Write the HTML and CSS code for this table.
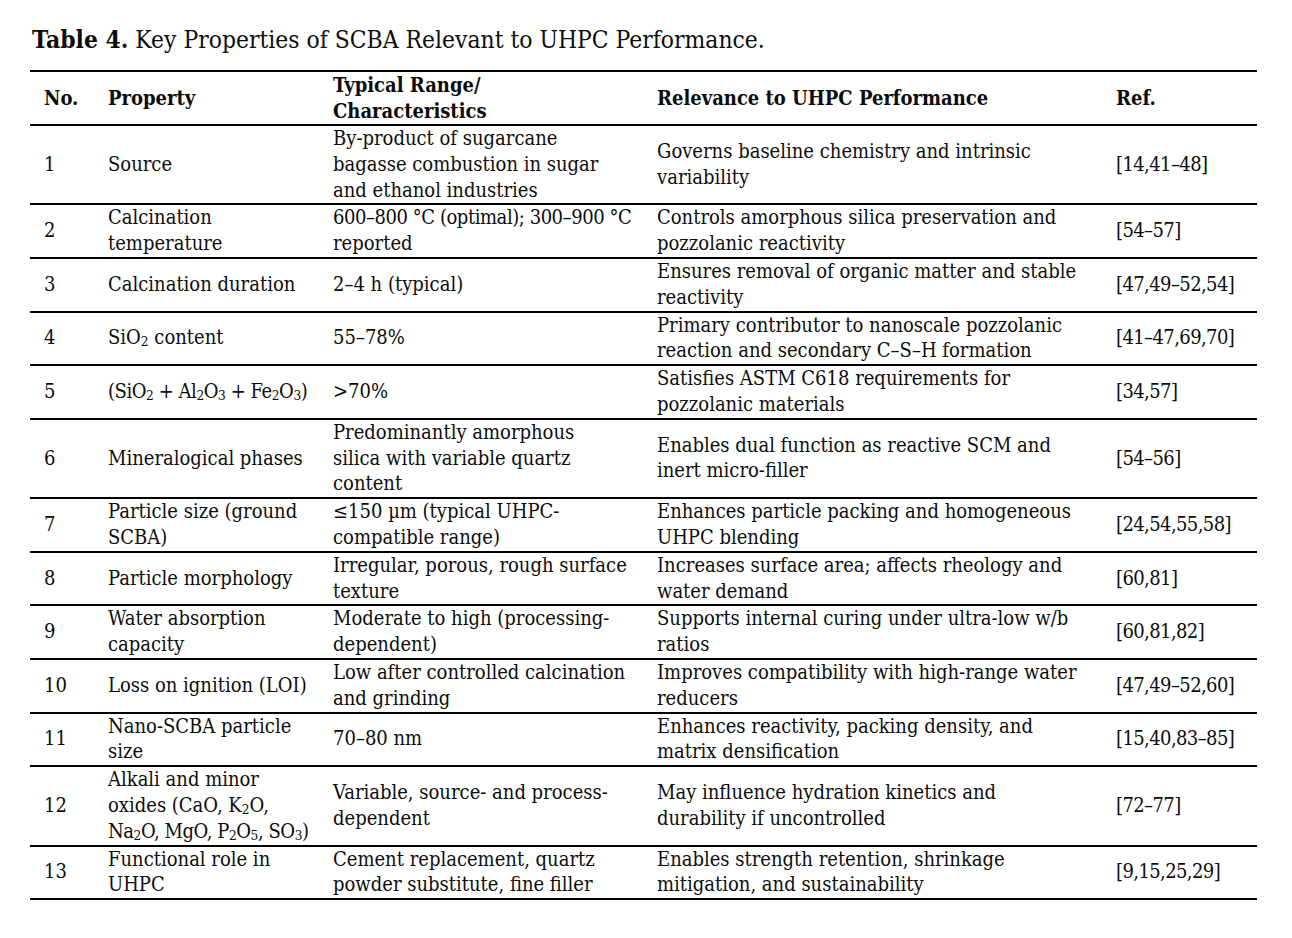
FILE: index.html
```html
<!DOCTYPE html>
<html lang="en">
<head>
<meta charset="utf-8">
<title>Table 4</title>
<link rel="stylesheet" href="styles.css">
</head>
<body>
<div class="page">
  <h1 class="caption"><b>Table 4.</b> Key Properties of SCBA Relevant to UHPC Performance.</h1>
  <table class="props">
    <colgroup>
      <col class="c-no"><col class="c-prop"><col class="c-range"><col class="c-rel"><col class="c-ref">
    </colgroup>
    <thead>
      <tr>
        <th class="first">No.</th>
        <th>Property</th>
        <th>Typical Range/<br>Characteristics</th>
        <th>Relevance to UHPC Performance</th>
        <th>Ref.</th>
      </tr>
    </thead>
    <tbody>
      <tr>
        <td class="first">1</td>
        <td>Source</td>
        <td>By-product of sugarcane<br>bagasse combustion in sugar<br>and ethanol industries</td>
        <td>Governs baseline chemistry and intrinsic<br>variability</td>
        <td class="ref">[14,41–48]</td>
      </tr>
      <tr>
        <td class="first">2</td>
        <td>Calcination<br>temperature</td>
        <td><span class="tight">600–800 °C (optimal); 300–900 °C</span><br>reported</td>
        <td>Controls amorphous silica preservation and<br>pozzolanic reactivity</td>
        <td class="ref">[54–57]</td>
      </tr>
      <tr>
        <td class="first">3</td>
        <td>Calcination duration</td>
        <td>2–4 h (typical)</td>
        <td>Ensures removal of organic matter and stable<br>reactivity</td>
        <td class="ref">[47,49–52,54]</td>
      </tr>
      <tr>
        <td class="first">4</td>
        <td>SiO<sub>2</sub> content</td>
        <td>55–78%</td>
        <td>Primary contributor to nanoscale pozzolanic<br>reaction and secondary C–S–H formation</td>
        <td class="ref">[41–47,69,70]</td>
      </tr>
      <tr>
        <td class="first">5</td>
        <td><span class="tight">(SiO<sub>2</sub> + Al<sub>2</sub>O<sub>3</sub> + Fe<sub>2</sub>O<sub>3</sub>)</span></td>
        <td>&gt;70%</td>
        <td>Satisfies ASTM C618 requirements for<br>pozzolanic materials</td>
        <td class="ref">[34,57]</td>
      </tr>
      <tr>
        <td class="first">6</td>
        <td>Mineralogical phases</td>
        <td>Predominantly amorphous<br>silica with variable quartz<br>content</td>
        <td>Enables dual function as reactive SCM and<br>inert micro-filler</td>
        <td class="ref">[54–56]</td>
      </tr>
      <tr>
        <td class="first">7</td>
        <td>Particle size (ground<br>SCBA)</td>
        <td>≤150 µm (typical UHPC-<br>compatible range)</td>
        <td>Enhances particle packing and homogeneous<br>UHPC blending</td>
        <td class="ref">[24,54,55,58]</td>
      </tr>
      <tr>
        <td class="first">8</td>
        <td>Particle morphology</td>
        <td>Irregular, porous, rough surface<br>texture</td>
        <td>Increases surface area; affects rheology and<br>water demand</td>
        <td class="ref">[60,81]</td>
      </tr>
      <tr>
        <td class="first">9</td>
        <td>Water absorption<br>capacity</td>
        <td>Moderate to high (processing-<br>dependent)</td>
        <td>Supports internal curing under ultra-low w/b<br>ratios</td>
        <td class="ref">[60,81,82]</td>
      </tr>
      <tr>
        <td class="first">10</td>
        <td>Loss on ignition (LOI)</td>
        <td>Low after controlled calcination<br>and grinding</td>
        <td>Improves compatibility with high-range water<br>reducers</td>
        <td class="ref">[47,49–52,60]</td>
      </tr>
      <tr>
        <td class="first">11</td>
        <td>Nano-SCBA particle<br>size</td>
        <td>70–80 nm</td>
        <td>Enhances reactivity, packing density, and<br>matrix densification</td>
        <td class="ref">[15,40,83–85]</td>
      </tr>
      <tr>
        <td class="first">12</td>
        <td>Alkali and minor<br>oxides (CaO, K<sub>2</sub>O,<br><span class="tight">Na<sub>2</sub>O, MgO, P<sub>2</sub>O<sub>5</sub>, SO<sub>3</sub>)</span></td>
        <td>Variable, source- and process-<br>dependent</td>
        <td>May influence hydration kinetics and<br>durability if uncontrolled</td>
        <td class="ref">[72–77]</td>
      </tr>
      <tr>
        <td class="first">13</td>
        <td>Functional role in<br>UHPC</td>
        <td>Cement replacement, quartz<br>powder substitute, fine filler</td>
        <td>Enables strength retention, shrinkage<br>mitigation, and sustainability</td>
        <td class="ref">[9,15,25,29]</td>
      </tr>
    </tbody>
  </table>
</div>
</body>
</html>
```
FILE: styles.css
```css
html, body {
  margin: 0;
  padding: 0;
  background: #ffffff;
}
body {
  font-family: "DejaVu Serif Condensed", "DejaVu Serif", "Liberation Serif", serif;
  color: #0c0c0c;
}
.page {
  padding: 26px 35px 0 30px;
}
.caption {
  margin: 0 0 16px 2px;
  font-size: 24.4px;
  font-weight: normal;
  line-height: 28px;
  white-space: nowrap;
}
.caption b {
  font-weight: bold;
}
.props {
  width: 1227px;
  border-collapse: collapse;
  border-top: 2px solid #000;
  font-size: 20px;
}
.c-no { width: 78px; }
.c-prop { width: 225px; }
.c-range { width: 324px; }
.c-rel { width: 459px; }
.c-ref { width: 141px; }
.props th,
.props td {
  padding: 0;
  line-height: 25.8px;
  text-align: left;
  vertical-align: middle;
  white-space: nowrap;
}
.props thead th {
  font-weight: bold;
  line-height: 26px;
}
.props .first {
  padding-left: 14px;
}
.props .ref {
  letter-spacing: -0.6px;
}
.props .tight {
  letter-spacing: -0.45px;
}
.props tr {
  border-bottom: 2px solid #000;
}
.props sub {
  font-size: 0.68em;
  line-height: 0;
  vertical-align: -0.18em;
}
```
